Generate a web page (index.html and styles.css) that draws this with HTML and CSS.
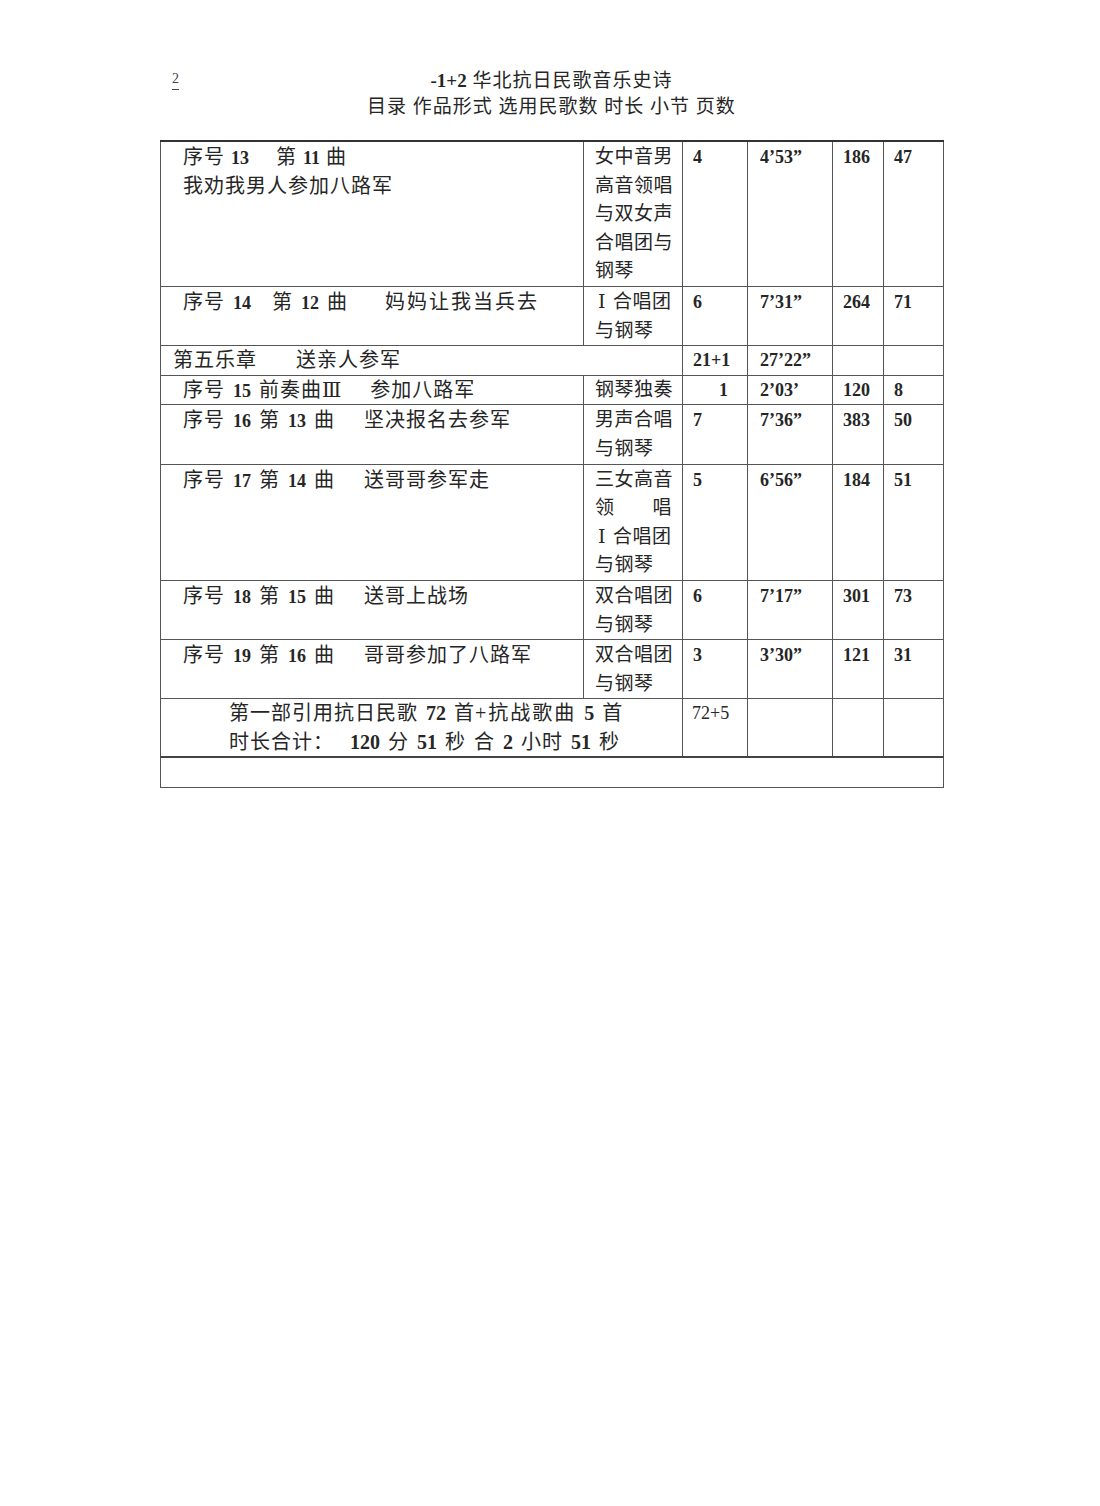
FILE: index.html
```html
<!DOCTYPE html>
<html lang="zh">
<head>
<meta charset="utf-8">
<title>华北抗日民歌音乐史诗 目录</title>
<link rel="stylesheet" href="styles.css">
</head>
<body>
<div class="page">
  <header class="head">
    <div class="pageno"><span>2</span></div>
    <div class="title">
      <div class="t1"><b>-1+2</b> 华北抗日民歌音乐史诗</div>
      <div class="t2">目录 作品形式 选用民歌数 时长 小节 页数</div>
    </div>
    <div></div>
  </header>

  <table class="toc">
    <colgroup>
      <col class="c-name">
      <col class="c-form">
      <col class="c-count">
      <col class="c-time">
      <col class="c-bars">
      <col class="c-pages">
    </colgroup>
    <tbody>
      <tr class="first">
        <td class="name"><div class="tight">序号 <b>13</b>　 第 <b>11</b> 曲</div><div>我劝我男人参加八路军</div></td>
        <td class="form"><div>女中音男</div><div>高音领唱</div><div>与双女声</div><div>合唱团与</div><div>钢琴</div></td>
        <td class="num count">4</td>
        <td class="num time">4’53”</td>
        <td class="num bars">186</td>
        <td class="num pages">47</td>
      </tr>
      <tr>
        <td class="name"><div>序号 <b>14</b>　第 <b>12</b> 曲　  <span class="wide">妈妈让我当兵去</span></div></td>
        <td class="form"><div><span class="roman">Ⅰ</span>合唱团</div><div>与钢琴</div></td>
        <td class="num count">6</td>
        <td class="num time">7’31”</td>
        <td class="num bars">264</td>
        <td class="num pages">71</td>
      </tr>
      <tr class="single">
        <td class="chapter" colspan="2"><div>第五乐章　   送亲人参军</div></td>
        <td class="num count">21+1</td>
        <td class="num time">27’22”</td>
        <td></td>
        <td></td>
      </tr>
      <tr class="single">
        <td class="name"><div>序号 <b>15</b> 前奏曲<span class="roman3">Ⅲ</span>　 参加八路军</div></td>
        <td class="form"><div>钢琴独奏</div></td>
        <td class="num count right">1</td>
        <td class="num time">2’03’</td>
        <td class="num bars">120</td>
        <td class="num pages">8</td>
      </tr>
      <tr>
        <td class="name"><div>序号 <b>16</b> 第 <b>13</b> 曲　 坚决报名去参军</div></td>
        <td class="form"><div>男声合唱</div><div>与钢琴</div></td>
        <td class="num count">7</td>
        <td class="num time">7’36”</td>
        <td class="num bars">383</td>
        <td class="num pages">50</td>
      </tr>
      <tr>
        <td class="name"><div>序号 <b>17</b> 第 <b>14</b> 曲　 送哥哥参军走</div></td>
        <td class="form"><div>三女高音</div><div class="spread"><span>领</span><span>唱</span></div><div><span class="roman">Ⅰ</span>合唱团</div><div>与钢琴</div></td>
        <td class="num count">5</td>
        <td class="num time">6’56”</td>
        <td class="num bars">184</td>
        <td class="num pages">51</td>
      </tr>
      <tr>
        <td class="name"><div>序号 <b>18</b> 第 <b>15</b> 曲　 送哥上战场</div></td>
        <td class="form"><div>双合唱团</div><div>与钢琴</div></td>
        <td class="num count">6</td>
        <td class="num time">7’17”</td>
        <td class="num bars">301</td>
        <td class="num pages">73</td>
      </tr>
      <tr>
        <td class="name"><div>序号 <b>19</b> 第 <b>16</b> 曲　 哥哥参加了八路军</div></td>
        <td class="form"><div>双合唱团</div><div>与钢琴</div></td>
        <td class="num count">3</td>
        <td class="num time">3’30”</td>
        <td class="num bars">121</td>
        <td class="num pages">31</td>
      </tr>
      <tr class="summary">
        <td class="sum" colspan="2"><div>第一部引用抗日民歌 <b>72</b> 首<span class="plus">+抗战歌曲</span> <b>5</b> 首</div><div>时长合计：  <b>120</b> 分 <b>51</b> 秒 合 <b>2</b> 小时 <b>51</b> 秒</div></td>
        <td class="total">72+5</td>
        <td></td>
        <td></td>
        <td></td>
      </tr>
      <tr class="single">
        <td class="blank" colspan="6">&nbsp;</td>
      </tr>
    </tbody>
  </table>
</div>
</body>
</html>
```
FILE: styles.css
```css
html, body {
  margin: 0;
  padding: 0;
  background: #ffffff;
}

body {
  font-family: "Liberation Serif", "Noto Sans CJK SC", serif;
  color: #262626;
}

.page {
  width: 1100px;
  padding-top: 68px;
}

.head {
  margin-left: 160px;
  width: 783px;
  display: grid;
  grid-template-columns: 1fr auto 1fr;
}

.pageno {
  padding-left: 12px;
  padding-top: 3px;
  font-size: 14px;
  line-height: 16px;
  color: #444444;
}

.pageno span {
  text-decoration: underline;
  text-underline-offset: 6px;
  text-decoration-thickness: 1px;
}

.title {
  text-align: center;
  font-size: 19px;
  line-height: 26px;
  letter-spacing: 1px;
}

.title b {
  font-weight: 700;
  letter-spacing: 0;
}

.toc {
  margin-top: 20px;
  margin-left: 160px;
  width: 783px;
  table-layout: fixed;
  border-collapse: collapse;
}

.c-name { width: 423px; }
.c-form { width: 99px; }
.c-count { width: 65px; }
.c-time { width: 85px; }
.c-bars { width: 51px; }
.c-pages { width: 60px; }

.toc td {
  border: 1px solid #555555;
  vertical-align: top;
  padding: 1px 0 0 0;
  line-height: 28.6px;
}

.toc tr.first td {
  border-top: 2px solid #333333;
}

.toc tr.single td {
  padding-top: 0;
}

.toc tr.summary td {
  border-bottom: 2px solid #444444;
  padding-top: 0;
}

.name, .chapter, .sum {
  font-size: 20px;
  letter-spacing: 1px;
  white-space: pre;
}

.name, .sum {
  word-spacing: 2px;
}

.name .tight {
  word-spacing: 0;
}

.name b, .sum b {
  font-size: 18px;
  font-weight: 700;
  letter-spacing: 0;
  line-height: 1;
}

.sum b {
  font-size: 20px;
}

.wide {
  letter-spacing: 2px;
}

.plus {
  letter-spacing: 2px;
}

.roman3 {
  font-family: "DejaVu Serif", "Liberation Serif", serif;
  font-size: 20px;
  letter-spacing: 0;
  line-height: 1;
}

.name {
  padding-left: 22px !important;
}

.chapter {
  padding-left: 12px !important;
}

.sum {
  padding-left: 68px !important;
}

.form {
  padding-left: 11px !important;
  font-size: 19px;
  letter-spacing: 0.5px;
}

.roman {
  font-family: "DejaVu Serif", "Liberation Serif", serif;
  font-size: 19px;
  line-height: 1;
  padding-left: 3px;
  margin-right: 7px;
}

.spread {
  width: 77px;
  display: flex;
  justify-content: space-between;
}

.num {
  font-size: 18px;
  font-weight: 700;
}

.count {
  padding-left: 10px !important;
}

.count.right {
  text-align: right;
  padding-left: 0 !important;
  padding-right: 19px !important;
}

.time {
  padding-left: 12px !important;
}

.bars {
  padding-left: 10px !important;
}

.pages {
  padding-left: 10px !important;
}

.total {
  font-size: 18px;
  padding-left: 9px !important;
}

.blank {
  height: 28px;
}
```
